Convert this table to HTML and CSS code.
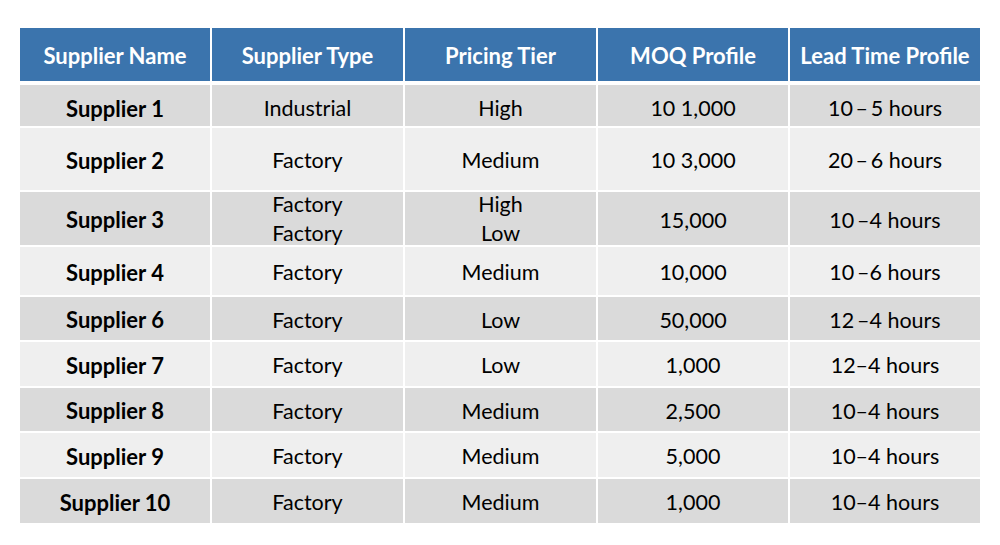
FILE: index.html
```html
<!DOCTYPE html>
<html lang="en">
<head>
<meta charset="utf-8">
<title>Suppliers</title>
<link rel="stylesheet" href="styles.css">
</head>
<body>
<div class="page">
  <div class="table">
    <div class="head">
      <div class="hcell">Supplier Name</div>
      <div class="hcell">Supplier Type</div>
      <div class="hcell">Pricing Tier</div>
      <div class="hcell">MOQ Profile</div>
      <div class="hcell">Lead Time Profile</div>
    </div>
    <div class="body">
      <div class="cell dark name first">Supplier 1</div>
      <div class="cell dark first">Industrial</div>
      <div class="cell dark first">High</div>
      <div class="cell dark first">10 1,000</div>
      <div class="cell dark first">10&#8201;&#8211;&#8201;5 hours</div>

      <div class="cell light name">Supplier 2</div>
      <div class="cell light">Factory</div>
      <div class="cell light">Medium</div>
      <div class="cell light">10 3,000</div>
      <div class="cell light">20&#8201;&#8211;&#8201;6 hours</div>

      <div class="cell dark name">Supplier 3</div>
      <div class="cell dark multi"><span>Factory</span><span>Factory</span></div>
      <div class="cell dark multi"><span>High</span><span>Low</span></div>
      <div class="cell dark">15,000</div>
      <div class="cell dark">10&#8201;&#8211;4 hours</div>

      <div class="cell light name">Supplier 4</div>
      <div class="cell light">Factory</div>
      <div class="cell light">Medium</div>
      <div class="cell light">10,000</div>
      <div class="cell light">10&#8201;&#8211;6 hours</div>

      <div class="cell dark name">Supplier 6</div>
      <div class="cell dark">Factory</div>
      <div class="cell dark">Low</div>
      <div class="cell dark">50,000</div>
      <div class="cell dark">12&#8201;&#8211;4 hours</div>

      <div class="cell light name">Supplier 7</div>
      <div class="cell light">Factory</div>
      <div class="cell light">Low</div>
      <div class="cell light">1,000</div>
      <div class="cell light">12&#8211;4 hours</div>

      <div class="cell dark name">Supplier 8</div>
      <div class="cell dark">Factory</div>
      <div class="cell dark">Medium</div>
      <div class="cell dark">2,500</div>
      <div class="cell dark">10&#8211;4 hours</div>

      <div class="cell light name">Supplier 9</div>
      <div class="cell light">Factory</div>
      <div class="cell light">Medium</div>
      <div class="cell light">5,000</div>
      <div class="cell light">10&#8211;4 hours</div>

      <div class="cell dark name">Supplier 10</div>
      <div class="cell dark">Factory</div>
      <div class="cell dark">Medium</div>
      <div class="cell dark">1,000</div>
      <div class="cell dark">10&#8211;4 hours</div>
    </div>
  </div>
</div>
</body>
</html>
```

FILE: styles.css
```css
html, body {
  margin: 0;
  padding: 0;
  background: #ffffff;
}

body {
  font-family: Lato, "Open Sans", "Liberation Sans", sans-serif;
  color: #000000;
}

.page {
  width: 1000px;
  height: 545px;
  padding: 28px 20px 0 20px;
  box-sizing: border-box;
}

.table {
  width: 960px;
  display: flex;
  flex-direction: column;
  gap: 4px;
}

.head,
.body {
  display: grid;
  grid-template-columns: 190px 191px 191px 190px 190px;
  column-gap: 2px;
}

.head {
  height: 53px;
}

.body {
  row-gap: 2px;
  grid-template-rows: 41px 62px 53px 48px 43px 44px 43px 44px 44px;
}

.hcell {
  background: #3b74ad;
  color: #ffffff;
  font-weight: 700;
  font-size: 22px;
  display: flex;
  align-items: center;
  justify-content: center;
  white-space: nowrap;
  padding-top: 1px;
}

.cell {
  font-size: 21.5px;
  display: flex;
  align-items: center;
  justify-content: center;
  white-space: nowrap;
  padding-top: 2px;
}

.cell.first {
  padding-top: 5px;
}

.cell.dark {
  background: #dadada;
}

.cell.light {
  background: #efefef;
}

.cell.name {
  font-weight: 700;
  font-size: 22px;
}

.cell.multi {
  flex-direction: column;
  line-height: 29px;
  padding-top: 0;
}
```
